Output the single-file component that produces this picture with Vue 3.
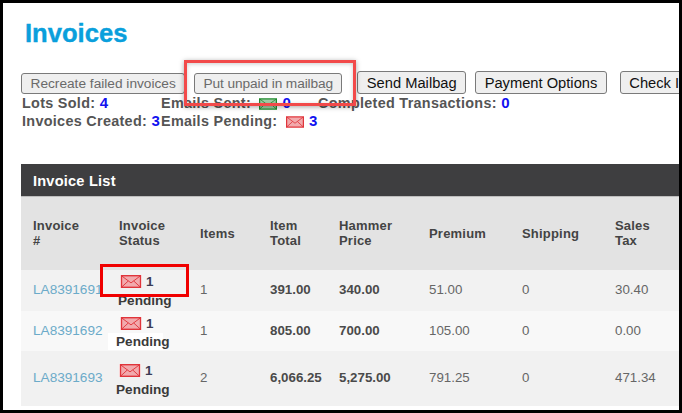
<script setup>
const columns = [86, 81, 70, 69, 90, 93, 93, 76]
const rows = [
  { id: 'LA8391691', items: 1, total: '391.00', hammer: '340.00', premium: '51.00', shipping: 0, tax: '30.40', kind: 'one' },
  { id: 'LA8391692', items: 1, total: '805.00', hammer: '700.00', premium: '105.00', shipping: 0, tax: '0.00', kind: 'two' },
  { id: 'LA8391693', items: 2, total: '6,066.25', hammer: '5,275.00', premium: '791.25', shipping: 0, tax: '471.34', kind: 'three' }
]
</script>

<template>
  <div class="frame">
    <svg width="0" height="0" class="defs" aria-hidden="true">
      <symbol id="envelope" viewBox="0 0 22 14">
        <rect x="0.75" y="0.75" width="20.5" height="12.5" fill="currentColor" fill-opacity="0.42" stroke="currentColor" stroke-width="1.5" />
        <path d="M1 1 L11 8.5 L21 1 M1 13 L8 6.5 M21 13 L14 6.5" fill="none" stroke="currentColor" stroke-width="1" />
      </symbol>
    </svg>

    <h1 class="title">Invoices</h1>

    <div class="actions">
      <button class="btn" disabled>Recreate failed invoices</button>
      <button class="btn narrow" disabled>Put unpaid in mailbag</button>
      <button class="btn tall wide-gap">Send Mailbag</button>
      <button class="btn tall">Payment Options</button>
      <button class="btn tall check">Check Invoices</button>
    </div>

    <div class="stats">
      <div>Lots Sold: <b class="num">4</b></div>
      <div>Emails Sent: <svg class="env green"><use href="#envelope" /></svg> <b class="num">0</b></div>
      <div>Completed Transactions: <b class="num">0</b></div>
      <div>Invoices Created: <b class="num">3</b></div>
      <div>Emails Pending: <svg class="env red"><use href="#envelope" /></svg> <b class="num">3</b></div>
    </div>

    <section class="panel">
      <div class="panel-title">Invoice List</div>
      <table class="grid">
        <colgroup>
          <col v-for="(w, i) in columns" :key="i" :style="{ width: w + 'px' }" />
        </colgroup>
        <thead>
          <tr>
            <th>Invoice<br />#</th>
            <th>Invoice<br />Status</th>
            <th>Items</th>
            <th>Item<br />Total</th>
            <th>Hammer<br />Price</th>
            <th>Premium</th>
            <th>Shipping</th>
            <th>Sales<br />Tax</th>
          </tr>
        </thead>
        <tbody>
          <tr v-for="r in rows" :key="r.id" :class="r.kind">
            <td><a class="link">{{ r.id }}</a></td>
            <td class="status-cell">
              <div class="status">
                <div class="status-top"><svg class="env red cell-env"><use href="#envelope" /></svg><span class="count">1</span></div>
                <div class="pending">Pending</div>
              </div>
            </td>
            <td>{{ r.items }}</td>
            <td class="strong">{{ r.total }}</td>
            <td class="strong">{{ r.hammer }}</td>
            <td>{{ r.premium }}</td>
            <td>{{ r.shipping }}</td>
            <td>{{ r.tax }}</td>
          </tr>
        </tbody>
      </table>
    </section>

    <div class="mark mark-action"></div>
    <div class="mark mark-status"></div>
  </div>
</template>

<style>
html, body { margin: 0; background: #fff; }
</style>

<style scoped>
.frame {
  position: relative;
  box-sizing: border-box;
  width: 682px;
  height: 413px;
  border: 3px solid #000;
  background: #fff;
  overflow: hidden;
  padding: 17px 0 0 18px;
  font-family: "Liberation Sans", Arial, sans-serif;
  color: #4a4a4a;
}
.defs { position: absolute; }
.title {
  margin: 0 0 0 4px;
  height: 26px;
  line-height: 26px;
  font-size: 25.6px;
  font-weight: 700;
  color: #0a9fdc;
  -webkit-text-stroke: 0.4px #0a9fdc;
}
.actions {
  display: flex;
  align-items: flex-end;
  gap: 9px;
  margin-top: 25px;
  height: 23px;
  white-space: nowrap;
}
.btn {
  flex: none;
  box-sizing: border-box;
  height: 21px;
  padding: 0 8.5px;
  border: 1px solid #7a7a7a;
  border-radius: 3px;
  background: #efefef;
  font: 13.7px "Liberation Sans", Arial, sans-serif;
  color: #111;
}
.btn:disabled { color: #6a6a6a; }
.btn.narrow { width: 148px; padding: 0; letter-spacing: -0.1px; }
.btn.tall { height: 23px; font-size: 14.7px; }
.wide-gap { margin-left: 6px; }
.check { margin-left: 4px; }
.stats {
  display: grid;
  grid-template-columns: 139px 157px auto;
  margin-left: 1px;
  font-size: 14.4px;
  font-weight: 700;
  line-height: 18px;
  letter-spacing: 0.3px;
  color: #555;
  white-space: nowrap;
}
.stats > div { height: 18px; }
.num { color: #1212f0; font-size: 15px; }
.env {
  display: inline-block;
  width: 18px;
  height: 12px;
  margin: 0 1px 0 4px;
  vertical-align: -2px;
}
.green { color: #1f8a2c; }
.red { color: #e0353b; }
.panel { margin-top: 34px; width: 658px; }
.panel-title {
  box-sizing: border-box;
  height: 32px;
  line-height: 34px;
  padding-left: 12px;
  background: #3e3e40;
  color: #fff;
  font-size: 14.6px;
  font-weight: 700;
  letter-spacing: 0.2px;
}
.grid {
  table-layout: fixed;
  width: 658px;
  border-collapse: collapse;
  font-size: 13px;
}
th {
  height: 73px;
  padding: 0 0 0 12px;
  background: #e3e3e3;
  border-top: 1px solid #bdbdbd;
  box-sizing: border-box;
  text-align: left;
  font-size: 13px;
  line-height: 15px;
  font-weight: 700;
  color: #444;
  letter-spacing: 0.2px;
}
td {
  padding: 0 0 0 12px;
  color: #666;
  font-size: 13.3px;
  line-height: 16px;
  white-space: nowrap;
}
tr.one td { height: 41px; background: #f2f2f2; }
tr.two td { height: 40px; background: #f8f8f8; }
tr.three td { height: 55px; background: #f1f1f1; }
.link { color: #6cabc9; font-size: 13.6px; }
.strong { font-weight: 700; color: #4a4a4a; }
td.status-cell { padding: 0; overflow: visible; }
.status { display: flex; flex-direction: column; align-items: flex-start; }
.status-top { display: flex; align-items: center; gap: 4px; height: 16px; margin-left: 13px; }
.cell-env { width: 22px; height: 13px; margin: 0; background: #fff; }
.count { font-weight: 700; font-size: 13.5px; color: #3c3c55; }
.pending {
  font-size: 13.6px;
  font-weight: 700;
  line-height: 18px;
  color: #3a3a3a;
}
tr.one .status { margin-top: 2px; }
tr.one .pending { margin-left: 11px; margin-top: 2px; height: 17px; }
tr.two .status { margin-top: 4px; }
tr.two .pending { background: #fff; padding: 0 0 0 8px; width: 47px; margin-left: 1px; height: 17px; margin-top: 1px; }
tr.three .status { margin-top: 3px; }
tr.three .status-top { margin-left: 12px; height: 18px; margin-top: 1px; }
tr.three .pending { margin-left: 9px; margin-top: 1px; }
.mark { position: absolute; box-sizing: border-box; pointer-events: none; }
.mark-action {
  left: 181px;
  top: 57px;
  width: 172px;
  height: 46px;
  border: 3px solid #f24a4a;
  box-shadow: 0 1px 5px rgba(0, 0, 0, 0.35), inset 0 1px 4px rgba(0, 0, 0, 0.2);
}
.mark-status {
  left: 97px;
  top: 261px;
  width: 89px;
  height: 33px;
  border: 3px solid #f00000;
}
</style>
